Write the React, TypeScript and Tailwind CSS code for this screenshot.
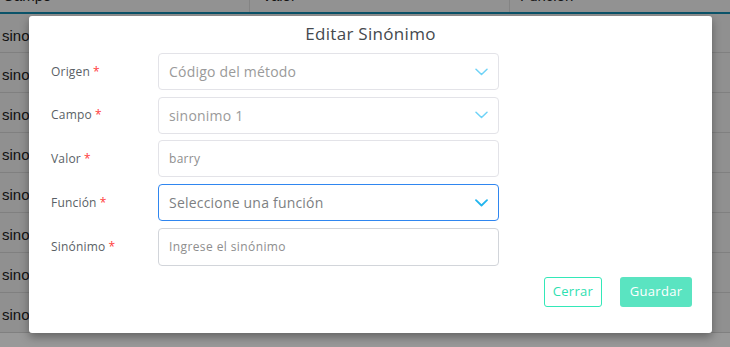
import React from "react";

const rows = Array.from({ length: 8 });

function Chevron({ strong }: { strong?: boolean }) {
  return (
    <svg width="13" height="8" viewBox="0 0 13 8" fill="none" className="shrink-0">
      <path
        d="M1 1.2 L6.5 6.5 L12 1.2"
        stroke={strong ? "#22b5ee" : "#6fd3f7"}
        strokeWidth={strong ? 1.8 : 1.5}
        strokeLinecap="round"
        strokeLinejoin="round"
      />
    </svg>
  );
}

function Label({ text }: { text: string }) {
  return (
    <div className="w-[107px] shrink-0 text-[12px] tracking-[0.2px] text-[#5a5f66]">
      {text}
      <span className="ml-[3px] text-[#ff3b3b]">*</span>
    </div>
  );
}

export default function App() {
  return (
    <div className="relative h-[347px] w-[730px] overflow-hidden bg-white font-['Liberation_Sans',sans-serif]">
      {/* background table */}
      <div className="flex h-[14px] overflow-hidden border-b-[2px] border-[#138bb0] bg-[#f4f4f4] text-[15px] text-[#222]">
        <div className="w-[250px] border-r border-[#ddd] pl-[3px]">
          <div className="-mt-[4px] leading-[0px]">Campo</div>
        </div>
        <div className="w-[260px] border-r border-[#ddd] pl-[12px]">
          <div className="-mt-[4px] leading-[0px]">Valor</div>
        </div>
        <div className="flex-1 pl-[10px]">
          <div className="-mt-[4px] leading-[0px]">Función</div>
        </div>
      </div>
      <div className="flex flex-col">
        {rows.map((_, i) => (
          <div
            key={i}
            className="flex h-[40px] items-center border-b border-[#d6d6d6] bg-[#f0f0f0] pl-[2px] pt-[6px] text-[15px] text-[#222] first:h-[39px]"
          >
            sinonimo {i + 1}
          </div>
        ))}
      </div>

      {/* overlay */}
      <div className="absolute inset-0 bg-black/40">
        <div className="ml-[29px] mt-[16px] flex h-[317px] w-[683px] flex-col rounded-[3px] bg-white px-[22px] font-['Open_Sans',sans-serif] shadow-[0_4px_10px_rgba(0,0,0,0.35)]">
          <div className="pt-[7px] text-center text-[17px] leading-[22px] tracking-[0.3px] text-[#45494e]">
            Editar Sinónimo
          </div>

          <div className="mt-[8px] flex flex-col gap-[6.7px]">
            <div className="flex items-center">
              <Label text="Origen" />
              <div className="flex h-[37px] w-[341px] items-center justify-between rounded-[4px] border border-[#e3e3e8] pl-[10px] pr-[10px] text-[14px] tracking-[0.2px] text-[#9a9a9a]">
                <span>Código del método</span>
                <Chevron />
              </div>
            </div>
            <div className="flex items-center">
              <Label text="Campo" />
              <div className="flex h-[37px] w-[341px] items-center justify-between rounded-[4px] border border-[#e3e3e8] pl-[10px] pr-[10px] text-[14px] tracking-[0.2px] text-[#9a9a9a]">
                <span>sinonimo 1</span>
                <Chevron />
              </div>
            </div>
            <div className="flex items-center">
              <Label text="Valor" />
              <div className="flex h-[37px] w-[341px] items-center rounded-[4px] border border-[#e3e3e8] pl-[10px] text-[12px] tracking-[0.3px] text-[#8e8e8e]">
                barry
              </div>
            </div>
            <div className="flex items-center">
              <Label text="Función" />
              <div className="flex h-[37px] w-[341px] items-center justify-between rounded-[4px] border border-[#2f86f0] pl-[10px] pr-[10px] text-[14px] tracking-[0.2px] text-[#7d7f82]">
                <span>Seleccione una función</span>
                <Chevron strong />
              </div>
            </div>
            <div className="flex items-center">
              <Label text="Sinónimo" />
              <div className="flex h-[38px] w-[341px] items-center rounded-[4px] border border-[#d2d5da] pl-[10px] text-[12px] tracking-[0.4px] text-[#8e8e8e]">
                Ingrese el sinónimo
              </div>
            </div>
          </div>

          <div className="mt-[11px] mr-[-2px] flex justify-end gap-[18px]">
            <button className="h-[30px] w-[58px] rounded-[3px] border border-[#33e8b8] bg-white text-[13px] tracking-[0.3px] text-[#2ee0b0]">
              Cerrar
            </button>
            <button className="h-[30px] w-[72px] rounded-[3px] bg-[#5ae4c1] text-[13px] tracking-[0.3px] text-white">
              Guardar
            </button>
          </div>
        </div>
      </div>
    </div>
  );
}
